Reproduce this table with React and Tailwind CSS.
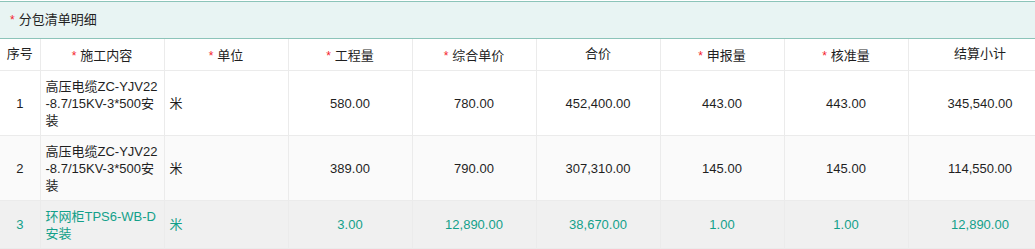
const cols = [
  { key: 'no', label: '序号', w: 40, req: false, align: 'center' },
  { key: 'name', label: '施工内容', w: 124, req: true, align: 'left' },
  { key: 'unit', label: '单位', w: 124, req: true, align: 'left' },
  { key: 'qty', label: '工程量', w: 124, req: true, align: 'center' },
  { key: 'price', label: '综合单价', w: 124, req: true, align: 'center' },
  { key: 'total', label: '合价', w: 124, req: false, align: 'center' },
  { key: 'report', label: '申报量', w: 124, req: true, align: 'center' },
  { key: 'approve', label: '核准量', w: 124, req: true, align: 'center' },
  { key: 'sum', label: '结算小计', w: 144, req: false, align: 'center' },
]

const rows = [
  { no: 1, name: '高压电缆ZC-YJV22-8.7/15KV-3*500安装', unit: '米', qty: '580.00', price: '780.00', total: '452,400.00', report: '443.00', approve: '443.00', sum: '345,540.00' },
  { no: 2, name: '高压电缆ZC-YJV22-8.7/15KV-3*500安装', unit: '米', qty: '389.00', price: '790.00', total: '307,310.00', report: '145.00', approve: '145.00', sum: '114,550.00' },
  { no: 3, name: '环网柜TPS6-WB-D安装', unit: '米', qty: '3.00', price: '12,890.00', total: '38,670.00', report: '1.00', approve: '1.00', sum: '12,890.00', active: true },
]

const rowBg = ['bg-white', 'bg-[#fafafa]', 'bg-[#f0f0f0]']

export default function App() {
  return (
    <div
      className="w-[1035px] h-[249px] overflow-hidden bg-white pt-px text-[13px] text-[#1f1f1f]"
      style={{ fontFamily: '"Liberation Sans", Arial, "Noto Sans CJK SC", sans-serif' }}
    >
      {/* section title */}
      <div className="h-[38px] border-y border-[#8cc4b9] bg-[#e8f4f3] flex items-center pl-[10px]">
        <span className="text-[#f5222d] mr-1 text-[12px] leading-none">*</span>
        <span>分包清单明细</span>
      </div>

      <table className="table-fixed border-collapse w-[1052px]">
        <colgroup>
          {cols.map(c => <col key={c.key} style={{ width: c.w }} />)}
        </colgroup>
        <thead>
          <tr className="h-[31px]">
            {cols.map(c => (
              <th
                key={c.key}
                className={`font-normal border-r border-b border-[#ebebeb] px-[5px] text-center ${c.req ? 'pt-[3px]' : 'pb-[2px]'}`}
              >
                {c.req && <span className="text-[#f5222d] text-[12px] mr-1">*</span>}
                {c.label}
              </th>
            ))}
          </tr>
        </thead>
        <tbody>
          {rows.map((r, i) => (
            <tr key={r.no} className={`${rowBg[i]} ${r.active ? 'text-[#13a08a]' : ''}`}>
              {cols.map(c => (
                <td
                  key={c.key}
                  className={`border-r border-b border-[#ebebeb] px-[5px] pt-[7px] pb-[6px] leading-[17px] break-all ${c.align === 'left' ? 'text-left' : 'text-center'}`}
                >
                  {r[c.key]}
                </td>
              ))}
            </tr>
          ))}
        </tbody>
      </table>
    </div>
  )
}
